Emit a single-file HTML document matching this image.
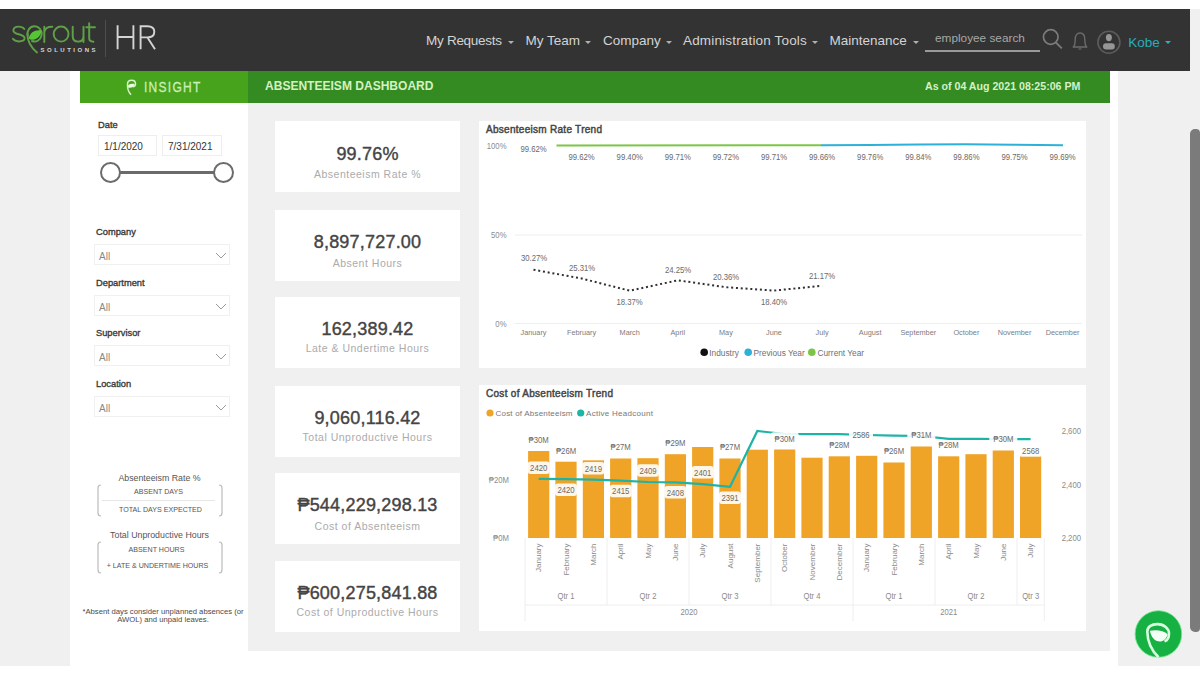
<!DOCTYPE html>
<html><head><meta charset="utf-8">
<style>
*{margin:0;padding:0;box-sizing:border-box}
html,body{width:1200px;height:675px;overflow:hidden;background:#fff;font-family:"Liberation Sans",sans-serif}
.a{position:absolute}
#hdr{left:0;top:9px;width:1190px;height:61.6px;background:#333333}
.nav{top:32.5px;font-size:13.5px;color:#d4d4d4;white-space:nowrap}
.caret{top:41px;width:0;height:0;border-left:3px solid transparent;border-right:3px solid transparent;border-top:3px solid #b0b0b0}
.car{display:inline-block;width:0;height:0;border-left:3px solid transparent;border-right:3px solid transparent;border-top:3px solid #bbb;vertical-align:middle;margin-left:6px}
.side{background:#f0f0f0}
.card{background:#fff;position:absolute}
.kv{position:absolute;left:0;width:185px;text-align:center;color:#444;font-size:18px;font-weight:normal;-webkit-text-stroke:0.4px #444;letter-spacing:0.2px}
.kl{position:absolute;left:0;width:185px;text-align:center;color:#ababab;font-size:10.5px;letter-spacing:0.5px}
.flab{font-size:9.3px;font-weight:normal;color:#3a3a3a;-webkit-text-stroke:0.35px #3a3a3a;left:96px}
.dd{left:94px;width:136px;height:21px;border:1px solid #f0f0f0;background:#fff}
.dd span{position:absolute;left:4px;top:6px;font-size:10px;color:#888}
.fx{font-size:7.1px;color:#555;text-align:center;white-space:nowrap}
</style></head><body>
<!-- side gray areas -->
<div class="a side" style="left:0;top:70px;width:70px;height:596px"></div>
<div class="a side" style="left:1118px;top:9px;width:82px;height:657px"></div>
<!-- center gray -->
<div class="a" style="left:248px;top:102px;width:862px;height:548.5px;background:#f0f0f0"></div>

<!-- header -->
<div id="hdr" class="a"></div>
<!-- logo -->
<svg class="a" style="left:0;top:0" width="110" height="60" viewBox="0 0 110 60">
<g fill="none" stroke="#5fa046" stroke-width="1.95" stroke-linecap="round">
<path d="M24.3 29 C23 27.2 21.2 26.6 18.8 26.6 C15.6 26.6 13.4 28.2 13.4 30.4 C13.4 32.7 15.8 33.5 18.8 34.2 C22 35 24.6 36 24.6 38.3 C24.6 40.5 22.2 41.4 18.8 41.4 C16 41.4 14 40.5 12.9 38.8"/>
<path d="M27.6 35.5 A7.1 7.6 0 1 1 32 41"/>
<path d="M27.4 34 C27.4 42.5 31 47.5 37 52.5"/>
<path d="M44.3 42 L44.3 26.8 M44.3 32 C45.2 28.3 48.2 26.6 52.3 26.8"/>
<ellipse cx="61.1" cy="34.1" rx="7.4" ry="7.5"/>
<path d="M72.7 26.8 L72.7 36 C72.7 40 75 41.6 78.1 41.6 C81.2 41.6 83.5 40 83.5 36 L83.5 26.8 M83.5 36 L83.5 42"/>
<path d="M89.2 23.2 L89.2 38.3 C89.2 40.8 90.6 41.7 93.4 41.7 M86.3 27.3 L95 27.3"/>
</g>
<path d="M28.6 38.6 C30 32 35.5 29.3 41.6 30.5 C40.6 37.2 35.5 40.4 30.8 39.8 Z" fill="#56c535"/>
<text x="40.5" y="51.8" font-family="Liberation Sans, sans-serif" font-size="6" font-weight="bold" fill="#d6d6d6" textLength="55" lengthAdjust="spacing">SOLUTIONS</text>
</svg>
<div class="a" style="left:105px;top:20px;width:1px;height:37px;background:#4e4e4e"></div>
<svg class="a" style="left:100px;top:15px" width="65" height="45" viewBox="100 15 65 45"><g fill="none" stroke="#d4d4d4" stroke-width="1.9"><path d="M117.6 25.3 L117.6 49.3 M133.4 25.3 L133.4 49.3 M117.6 37 L133.4 37"/><path d="M140.6 49.3 L140.6 26.2 L147.5 26.2 C152 26.2 154.3 28.6 154.3 31.8 C154.3 35 152 37.4 147.5 37.4 L140.6 37.4 M147.5 37.4 L155 49.3"/></g></svg>

<div class="a nav" style="left:426.0px;letter-spacing:-0.28px">My Requests</div><div class="a caret" style="left:508px"></div>
<div class="a nav" style="left:525.5px">My Team</div><div class="a caret" style="left:584.8px"></div>
<div class="a nav" style="left:603.0px">Company</div><div class="a caret" style="left:666px"></div>
<div class="a nav" style="left:683px;letter-spacing:0.17px">Administration Tools</div><div class="a caret" style="left:812px"></div>
<div class="a nav" style="left:829.5px">Maintenance</div><div class="a caret" style="left:913px"></div>
<div class="a" style="left:935px;top:31px;font-size:11.8px;color:#a8a8a8">employee search</div>
<div class="a" style="left:925px;top:50px;width:115px;height:2px;background:#9a9a9a"></div>
<svg class="a" style="left:1040px;top:26px" width="30" height="26"><circle cx="10.75" cy="11" r="7.3" fill="none" stroke="#7c7c7c" stroke-width="1.7"/><line x1="16" y1="16.6" x2="21.8" y2="22.4" stroke="#7c7c7c" stroke-width="1.9"/></svg>
<svg class="a" style="left:1070px;top:30px" width="20" height="22"><path d="M3.2 17 C5 15.5 5.2 13 5.2 9.5 C5.2 5.2 7.2 3 10 3 C12.8 3 14.8 5.2 14.8 9.5 C14.8 13 15 15.5 16.8 17 Z" fill="none" stroke="#6c6c6c" stroke-width="1.4" stroke-linejoin="round"/><path d="M8.6 18.6 Q10 19.8 11.4 18.6" stroke="#6c6c6c" stroke-width="1.2" fill="none"/></svg>
<svg class="a" style="left:1096px;top:29px" width="26" height="27"><circle cx="12.9" cy="13.25" r="11" fill="none" stroke="#5c5c5c" stroke-width="1.6"/><ellipse cx="12.9" cy="8.6" rx="3" ry="3.6" fill="#969696"/><rect x="7" y="14.2" width="11.8" height="6.4" rx="3" fill="#969696"/></svg>
<div class="a" style="left:1128.3px;top:35px;font-size:13.5px;color:#28adbd">Kobe</div><div class="a caret" style="left:1165px;border-top-color:#2bb0bf"></div>

<!-- green bar -->
<div class="a" style="left:80px;top:70.6px;width:168px;height:32px;background:#48a31c"></div>
<div class="a" style="left:248px;top:70.6px;width:862px;height:32px;background:#338b22"></div>
<div class="a" style="left:144px;top:77.5px;font-size:15px;color:#c9efb9;letter-spacing:1.6px;transform:scaleX(0.80);transform-origin:0 0;-webkit-text-stroke:0.3px #c9efb9">INSIGHT</div>
<svg class="a" style="left:124px;top:78px" width="14" height="19"><path d="M3.5 6 C3.5 3.5 5.5 2.2 7.6 2.2 C10 2.2 11.5 3.8 11.5 5.8 C11.5 7.6 10.2 8.8 8.6 8.8" fill="none" stroke="#d6f5c8" stroke-width="1.5"/><path d="M3.3 9.2 C4 6.3 6.6 5.3 10.6 6 C10 8.8 7.6 10.2 4.8 9.8 Z" fill="#eaffde"/><path d="M3.5 6 C3.2 10 4.5 14 7 16.8" fill="none" stroke="#d6f5c8" stroke-width="1.4"/></svg>
<div class="a" style="left:265px;top:78px;font-size:13.3px;font-weight:bold;color:#d3f2c3;transform:scaleX(0.905);transform-origin:0 0">ABSENTEEISM DASHBOARD</div>
<div class="a" style="left:924.5px;top:80px;font-size:11px;font-weight:bold;color:#d6f0c9;transform:scaleX(0.965);transform-origin:0 0">As of 04 Aug 2021 08:25:06 PM</div>


<!-- filter panel -->
<div class="a flab" style="left:98px;top:120px">Date</div>
<div class="a" style="left:98px;top:135px;width:59px;height:21px;border:1px solid #eeeeee"><span class="a" style="left:5px;top:5px;font-size:10px;color:#333">1/1/2020</span></div>
<div class="a" style="left:162px;top:135px;width:60px;height:21px;border:1px solid #eeeeee"><span class="a" style="left:5px;top:5px;font-size:10px;color:#333">7/31/2021</span></div>
<div class="a" style="left:120px;top:171px;width:94px;height:3px;background:#6b6b6b"></div>
<div class="a" style="left:100px;top:162px;width:21px;height:21px;border:2px solid #6b6b6b;border-radius:50%;background:#fff"></div>
<div class="a" style="left:213px;top:162px;width:21px;height:21px;border:2px solid #6b6b6b;border-radius:50%;background:#fff"></div>

<div class="a flab" style="top:227px">Company</div>
<div class="a dd" style="top:244px"><span>All</span><svg class="a" style="left:120px;top:7px" width="14" height="9"><path d="M1 1 L6 6 L11 1" fill="none" stroke="#9a9a9a" stroke-width="1"/></svg></div>
<div class="a flab" style="top:278px">Department</div>
<div class="a dd" style="top:295px"><span>All</span><svg class="a" style="left:120px;top:7px" width="14" height="9"><path d="M1 1 L6 6 L11 1" fill="none" stroke="#9a9a9a" stroke-width="1"/></svg></div>
<div class="a flab" style="top:328px">Supervisor</div>
<div class="a dd" style="top:345px"><span>All</span><svg class="a" style="left:120px;top:7px" width="14" height="9"><path d="M1 1 L6 6 L11 1" fill="none" stroke="#9a9a9a" stroke-width="1"/></svg></div>
<div class="a flab" style="top:379px">Location</div>
<div class="a dd" style="top:396px"><span>All</span><svg class="a" style="left:120px;top:7px" width="14" height="9"><path d="M1 1 L6 6 L11 1" fill="none" stroke="#9a9a9a" stroke-width="1"/></svg></div>

<div class="a fx" style="left:98px;top:473px;width:123px;font-size:8.8px;color:#555">Absenteeism Rate %</div>
<div class="a fx" style="left:97px;top:488px;width:123px">ABSENT DAYS</div>
<div class="a" style="left:102px;top:500px;width:113px;height:1px;background:#e6e6e6"></div>
<div class="a fx" style="left:99px;top:506px;width:123px">TOTAL DAYS EXPECTED</div>
<svg class="a" style="left:95px;top:484px" width="8" height="34"><path d="M6 1 Q3 1 3 4 L3 29 Q3 32 6 32" fill="none" stroke="#bbb" stroke-width="1.2"/></svg>
<svg class="a" style="left:217px;top:484px" width="8" height="34"><path d="M2 1 Q5 1 5 4 L5 29 Q5 32 2 32" fill="none" stroke="#bbb" stroke-width="1.2"/></svg>

<div class="a fx" style="left:98px;top:530px;width:123px;font-size:8.8px;color:#555">Total Unproductive Hours</div>
<div class="a fx" style="left:95px;top:545.5px;width:123px">ABSENT HOURS</div>
<div class="a fx" style="left:96px;top:561.5px;width:123px">+ LATE &amp; UNDERTIME HOURS</div>
<svg class="a" style="left:95px;top:541px" width="8" height="34"><path d="M6 1 Q3 1 3 4 L3 29 Q3 32 6 32" fill="none" stroke="#bbb" stroke-width="1.2"/></svg>
<svg class="a" style="left:217px;top:541px" width="8" height="34"><path d="M2 1 Q5 1 5 4 L5 29 Q5 32 2 32" fill="none" stroke="#bbb" stroke-width="1.2"/></svg>

<div class="a fx" style="left:78px;top:606.5px;width:170px;font-size:7.7px;color:#4a4a4a">*Absent days consider unplanned absences (or</div>
<div class="a fx" style="left:78px;top:615px;width:170px;font-size:7.7px;color:#4a4a4a">AWOL) and unpaid leaves.</div>

<!-- KPI cards -->
<div class="card" style="left:275px;top:121px;width:185px;height:71px"><div class="kv" style="top:23px">99.76%</div><div class="kl" style="top:47px">Absenteeism Rate %</div></div>
<div class="card" style="left:275px;top:210px;width:185px;height:71px"><div class="kv" style="top:22px">8,897,727.00</div><div class="kl" style="top:46.5px">Absent Hours</div></div>
<div class="card" style="left:275px;top:297px;width:185px;height:71px"><div class="kv" style="top:22px">162,389.42</div><div class="kl" style="top:45px">Late &amp; Undertime Hours</div></div>
<div class="card" style="left:275px;top:386px;width:185px;height:71px"><div class="kv" style="top:22px">9,060,116.42</div><div class="kl" style="top:45px">Total Unproductive Hours</div></div>
<div class="card" style="left:275px;top:473px;width:185px;height:71px"><div class="kv" style="top:22px">&#8369;544,229,298.13</div><div class="kl" style="top:46.5px">Cost of Absenteeism</div></div>
<div class="card" style="left:275px;top:561px;width:185px;height:71px"><div class="kv" style="top:22px">&#8369;600,275,841.88</div><div class="kl" style="top:45px">Cost of Unproductive Hours</div></div>
<svg class="a" style="left:479px;top:121px" width="607" height="247" viewBox="479 121 607 247" font-family="Liberation Sans, sans-serif">
<rect x="479" y="121" width="607" height="247" fill="#fff"/>
<text x="486" y="132.5" font-size="10" fill="#454545" stroke="#454545" stroke-width="0.45" textLength="116" lengthAdjust="spacing">Absenteeism Rate Trend</text>
<g transform="translate(506.50,148.80) scale(0.86,1)"><text x="0" y="0" font-size="9" fill="#8c8c8c" text-anchor="end" >100%</text></g>
<g transform="translate(506.50,238.40) scale(0.86,1)"><text x="0" y="0" font-size="9" fill="#8c8c8c" text-anchor="end" >50%</text></g>
<g transform="translate(506.50,326.60) scale(0.86,1)"><text x="0" y="0" font-size="9" fill="#8c8c8c" text-anchor="end" >0%</text></g>
<line x1="515" y1="235" x2="1082" y2="235" stroke="#eeeeee" stroke-width="1"/>
<line x1="515" y1="323.5" x2="1082" y2="323.5" stroke="#eeeeee" stroke-width="1"/>
<text x="533.50" y="335.20" font-size="7.3" fill="#7d7d7d" text-anchor="middle" >January</text>
<text x="581.60" y="335.20" font-size="7.3" fill="#7d7d7d" text-anchor="middle" >February</text>
<text x="629.70" y="335.20" font-size="7.3" fill="#7d7d7d" text-anchor="middle" >March</text>
<text x="677.80" y="335.20" font-size="7.3" fill="#7d7d7d" text-anchor="middle" >April</text>
<text x="725.90" y="335.20" font-size="7.3" fill="#7d7d7d" text-anchor="middle" >May</text>
<text x="774.00" y="335.20" font-size="7.3" fill="#7d7d7d" text-anchor="middle" >June</text>
<text x="822.10" y="335.20" font-size="7.3" fill="#7d7d7d" text-anchor="middle" >July</text>
<text x="870.20" y="335.20" font-size="7.3" fill="#7d7d7d" text-anchor="middle" >August</text>
<text x="918.30" y="335.20" font-size="7.3" fill="#7d7d7d" text-anchor="middle" >September</text>
<text x="966.40" y="335.20" font-size="7.3" fill="#7d7d7d" text-anchor="middle" >October</text>
<text x="1014.50" y="335.20" font-size="7.3" fill="#7d7d7d" text-anchor="middle" >November</text>
<text x="1062.60" y="335.20" font-size="7.3" fill="#7d7d7d" text-anchor="middle" >December</text>
<polyline points="821,145.3 870,145 918,144.6 966,144.3 1014,144.8 1063,145.3" fill="none" stroke="#2db1d8" stroke-width="2"/>
<line x1="556.5" y1="145.5" x2="821" y2="145.3" stroke="#7cc646" stroke-width="2"/>
<g transform="translate(533.50,152.00) scale(0.86,1)"><text x="0" y="0" font-size="9" fill="#6a6a6a" text-anchor="middle" >99.62%</text></g>
<g transform="translate(581.60,160.20) scale(0.86,1)"><text x="0" y="0" font-size="9" fill="#6a6a6a" text-anchor="middle" >99.62%</text></g>
<g transform="translate(629.70,160.20) scale(0.86,1)"><text x="0" y="0" font-size="9" fill="#6a6a6a" text-anchor="middle" >99.40%</text></g>
<g transform="translate(677.80,160.20) scale(0.86,1)"><text x="0" y="0" font-size="9" fill="#6a6a6a" text-anchor="middle" >99.71%</text></g>
<g transform="translate(725.90,160.20) scale(0.86,1)"><text x="0" y="0" font-size="9" fill="#6a6a6a" text-anchor="middle" >99.72%</text></g>
<g transform="translate(774.00,160.20) scale(0.86,1)"><text x="0" y="0" font-size="9" fill="#6a6a6a" text-anchor="middle" >99.71%</text></g>
<g transform="translate(822.10,160.20) scale(0.86,1)"><text x="0" y="0" font-size="9" fill="#6a6a6a" text-anchor="middle" >99.66%</text></g>
<g transform="translate(870.20,160.20) scale(0.86,1)"><text x="0" y="0" font-size="9" fill="#6a6a6a" text-anchor="middle" >99.76%</text></g>
<g transform="translate(918.30,160.20) scale(0.86,1)"><text x="0" y="0" font-size="9" fill="#6a6a6a" text-anchor="middle" >99.84%</text></g>
<g transform="translate(966.40,160.20) scale(0.86,1)"><text x="0" y="0" font-size="9" fill="#6a6a6a" text-anchor="middle" >99.86%</text></g>
<g transform="translate(1014.50,160.20) scale(0.86,1)"><text x="0" y="0" font-size="9" fill="#6a6a6a" text-anchor="middle" >99.75%</text></g>
<g transform="translate(1062.60,160.20) scale(0.86,1)"><text x="0" y="0" font-size="9" fill="#6a6a6a" text-anchor="middle" >99.69%</text></g>
<polyline points="533.5,269.7 581.6,278.5 629.7,290.7 677.8,280.3 725.9,287.2 774.0,290.6 822.1,285.7" fill="none" stroke="#303030" stroke-width="2" stroke-dasharray="2 2.8"/>
<g transform="translate(534.00,261.30) scale(0.86,1)"><text x="0" y="0" font-size="9" fill="#6a6a6a" text-anchor="middle" >30.27%</text></g>
<g transform="translate(582.00,270.80) scale(0.86,1)"><text x="0" y="0" font-size="9" fill="#6a6a6a" text-anchor="middle" >25.31%</text></g>
<g transform="translate(629.50,305.40) scale(0.86,1)"><text x="0" y="0" font-size="9" fill="#6a6a6a" text-anchor="middle" >18.37%</text></g>
<g transform="translate(678.00,272.80) scale(0.86,1)"><text x="0" y="0" font-size="9" fill="#6a6a6a" text-anchor="middle" >24.25%</text></g>
<g transform="translate(726.00,279.50) scale(0.86,1)"><text x="0" y="0" font-size="9" fill="#6a6a6a" text-anchor="middle" >20.36%</text></g>
<g transform="translate(774.00,305.40) scale(0.86,1)"><text x="0" y="0" font-size="9" fill="#6a6a6a" text-anchor="middle" >18.40%</text></g>
<g transform="translate(822.00,278.50) scale(0.86,1)"><text x="0" y="0" font-size="9" fill="#6a6a6a" text-anchor="middle" >21.17%</text></g>
<circle cx="704.2" cy="352.3" r="3.8" fill="#111"/><text x="709.30" y="355.50" font-size="8.3" fill="#707070" text-anchor="start" >Industry</text>
<circle cx="748.2" cy="352.3" r="3.8" fill="#2db1d8"/><text x="753.50" y="355.50" font-size="8.3" fill="#707070" text-anchor="start" >Previous Year</text>
<circle cx="811.8" cy="352.3" r="3.8" fill="#7cc646"/><text x="817.50" y="355.50" font-size="8.3" fill="#707070" text-anchor="start" >Current Year</text>
</svg>
<svg class="a" style="left:479px;top:385px" width="607" height="246" viewBox="479 385 607 246" font-family="Liberation Sans, sans-serif">
<rect x="479" y="385" width="607" height="246" fill="#fff"/>
<text x="486" y="396.5" font-size="10" fill="#454545" stroke="#454545" stroke-width="0.45" textLength="127" lengthAdjust="spacing">Cost of Absenteeism Trend</text>
<circle cx="490" cy="413" r="3.6" fill="#f0a427"/><text x="495.5" y="415.9" font-size="8" fill="#777" textLength="77" lengthAdjust="spacing">Cost of Absenteeism</text>
<circle cx="580.7" cy="413" r="3.6" fill="#1ab7a6"/><text x="586" y="415.9" font-size="8" fill="#777" textLength="67" lengthAdjust="spacing">Active Headcount</text>
<g transform="translate(509.00,483.30) scale(0.86,1)"><text x="0" y="0" font-size="9" fill="#8c8c8c" text-anchor="end" >&#8369;20M</text></g>
<g transform="translate(509.00,541.30) scale(0.86,1)"><text x="0" y="0" font-size="9" fill="#8c8c8c" text-anchor="end" >&#8369;0M</text></g>
<g transform="translate(1081.00,434.30) scale(0.86,1)"><text x="0" y="0" font-size="9" fill="#8c8c8c" text-anchor="end" >2,600</text></g>
<g transform="translate(1081.00,487.60) scale(0.86,1)"><text x="0" y="0" font-size="9" fill="#8c8c8c" text-anchor="end" >2,400</text></g>
<g transform="translate(1081.00,541.30) scale(0.86,1)"><text x="0" y="0" font-size="9" fill="#8c8c8c" text-anchor="end" >2,200</text></g>
<rect x="528.1" y="451" width="21.2" height="87.0" fill="#f0a427"/>
<rect x="555.4" y="461.7" width="21.2" height="76.3" fill="#f0a427"/>
<rect x="582.8" y="460.3" width="21.2" height="77.7" fill="#f0a427"/>
<rect x="610.1" y="458.5" width="21.2" height="79.5" fill="#f0a427"/>
<rect x="637.4" y="458.2" width="21.2" height="79.8" fill="#f0a427"/>
<rect x="664.8" y="454.2" width="21.2" height="83.8" fill="#f0a427"/>
<rect x="692.1" y="447" width="21.2" height="91.0" fill="#f0a427"/>
<rect x="719.4" y="458.5" width="21.2" height="79.5" fill="#f0a427"/>
<rect x="746.7" y="449.7" width="21.2" height="88.3" fill="#f0a427"/>
<rect x="774.1" y="449.5" width="21.2" height="88.5" fill="#f0a427"/>
<rect x="801.4" y="457.7" width="21.2" height="80.3" fill="#f0a427"/>
<rect x="828.7" y="456.3" width="21.2" height="81.7" fill="#f0a427"/>
<rect x="856.1" y="455.8" width="21.2" height="82.2" fill="#f0a427"/>
<rect x="883.4" y="462.5" width="21.2" height="75.5" fill="#f0a427"/>
<rect x="910.7" y="446.5" width="21.2" height="91.5" fill="#f0a427"/>
<rect x="938.1" y="456.3" width="21.2" height="81.7" fill="#f0a427"/>
<rect x="965.4" y="454.2" width="21.2" height="83.8" fill="#f0a427"/>
<rect x="992.7" y="450.5" width="21.2" height="87.5" fill="#f0a427"/>
<rect x="1020.0" y="455.8" width="21.2" height="82.2" fill="#f0a427"/>
<polyline points="538.7,478.9 566.0,479.2 593.4,479.6 620.7,480.6 648.0,482.0 675.4,482.4 702.7,484.2 730.0,486.8 757.3,431 784.7,434 812.0,434.2 839.3,434.2 866.7,435 894.0,435.6 921.3,436 948.7,438.8 976.0,438.8 1003.3,439 1030.6,439.2" fill="none" stroke="#1db3a6" stroke-width="2.2"/>
<rect x="527.7" y="461.6" width="22.0" height="12.5" rx="3" fill="#fff" fill-opacity="0.9"/><g transform="translate(538.70,471.00) scale(0.86,1)"><text x="0" y="0" font-size="9" fill="#6a6a6a" text-anchor="middle" >2420</text></g>
<rect x="555.0" y="483.4" width="22.0" height="12.5" rx="3" fill="#fff" fill-opacity="0.9"/><g transform="translate(566.03,492.90) scale(0.86,1)"><text x="0" y="0" font-size="9" fill="#6a6a6a" text-anchor="middle" >2420</text></g>
<rect x="582.4" y="462.1" width="22.0" height="12.5" rx="3" fill="#fff" fill-opacity="0.9"/><g transform="translate(593.36,471.50) scale(0.86,1)"><text x="0" y="0" font-size="9" fill="#6a6a6a" text-anchor="middle" >2419</text></g>
<rect x="609.7" y="484.8" width="22.0" height="12.5" rx="3" fill="#fff" fill-opacity="0.9"/><g transform="translate(620.69,494.20) scale(0.86,1)"><text x="0" y="0" font-size="9" fill="#6a6a6a" text-anchor="middle" >2415</text></g>
<rect x="637.0" y="464.2" width="22.0" height="12.5" rx="3" fill="#fff" fill-opacity="0.9"/><g transform="translate(648.02,473.70) scale(0.86,1)"><text x="0" y="0" font-size="9" fill="#6a6a6a" text-anchor="middle" >2409</text></g>
<rect x="664.4" y="486.1" width="22.0" height="12.5" rx="3" fill="#fff" fill-opacity="0.9"/><g transform="translate(675.35,495.50) scale(0.86,1)"><text x="0" y="0" font-size="9" fill="#6a6a6a" text-anchor="middle" >2408</text></g>
<rect x="691.7" y="466.1" width="22.0" height="12.5" rx="3" fill="#fff" fill-opacity="0.9"/><g transform="translate(702.68,475.50) scale(0.86,1)"><text x="0" y="0" font-size="9" fill="#6a6a6a" text-anchor="middle" >2401</text></g>
<rect x="719.0" y="491.4" width="22.0" height="12.5" rx="3" fill="#fff" fill-opacity="0.9"/><g transform="translate(730.01,500.90) scale(0.86,1)"><text x="0" y="0" font-size="9" fill="#6a6a6a" text-anchor="middle" >2391</text></g>
<g transform="translate(538.70,443.00) scale(0.86,1)"><text x="0" y="0" font-size="9" fill="#6a6a6a" text-anchor="middle" >&#8369;30M</text></g>
<g transform="translate(566.03,454.20) scale(0.86,1)"><text x="0" y="0" font-size="9" fill="#6a6a6a" text-anchor="middle" >&#8369;26M</text></g>
<g transform="translate(620.69,450.20) scale(0.86,1)"><text x="0" y="0" font-size="9" fill="#6a6a6a" text-anchor="middle" >&#8369;27M</text></g>
<g transform="translate(675.35,446.20) scale(0.86,1)"><text x="0" y="0" font-size="9" fill="#6a6a6a" text-anchor="middle" >&#8369;29M</text></g>
<g transform="translate(730.01,450.20) scale(0.86,1)"><text x="0" y="0" font-size="9" fill="#6a6a6a" text-anchor="middle" >&#8369;27M</text></g>
<rect x="770.7" y="432.2" width="28.0" height="12.5" rx="3" fill="#fff" fill-opacity="0.9"/>
<g transform="translate(784.67,441.70) scale(0.86,1)"><text x="0" y="0" font-size="9" fill="#6a6a6a" text-anchor="middle" >&#8369;30M</text></g>
<g transform="translate(839.33,448.10) scale(0.86,1)"><text x="0" y="0" font-size="9" fill="#6a6a6a" text-anchor="middle" >&#8369;28M</text></g>
<g transform="translate(893.99,454.20) scale(0.86,1)"><text x="0" y="0" font-size="9" fill="#6a6a6a" text-anchor="middle" >&#8369;26M</text></g>
<rect x="907.3" y="428.8" width="28.0" height="12.5" rx="3" fill="#fff" fill-opacity="0.9"/>
<g transform="translate(921.32,438.20) scale(0.86,1)"><text x="0" y="0" font-size="9" fill="#6a6a6a" text-anchor="middle" >&#8369;31M</text></g>
<g transform="translate(948.65,448.10) scale(0.86,1)"><text x="0" y="0" font-size="9" fill="#6a6a6a" text-anchor="middle" >&#8369;28M</text></g>
<rect x="989.3" y="432.8" width="28.0" height="12.5" rx="3" fill="#fff" fill-opacity="0.9"/>
<g transform="translate(1003.31,442.20) scale(0.86,1)"><text x="0" y="0" font-size="9" fill="#6a6a6a" text-anchor="middle" >&#8369;30M</text></g>
<rect x="849.0" y="428.2" width="24.0" height="12.5" rx="3" fill="#fff" fill-opacity="0.9"/><g transform="translate(861.00,437.70) scale(0.86,1)"><text x="0" y="0" font-size="9" fill="#6a6a6a" text-anchor="middle" >2586</text></g>
<rect x="1018.7" y="444.2" width="24.0" height="12.5" rx="3" fill="#fff" fill-opacity="0.9"/><g transform="translate(1030.70,453.70) scale(0.86,1)"><text x="0" y="0" font-size="9" fill="#6a6a6a" text-anchor="middle" >2568</text></g>
<text transform="translate(541.3,543.5) rotate(-90)" font-size="8" fill="#8a8a8a" text-anchor="end">January</text>
<text transform="translate(568.6,543.5) rotate(-90)" font-size="8" fill="#8a8a8a" text-anchor="end">February</text>
<text transform="translate(596.0,543.5) rotate(-90)" font-size="8" fill="#8a8a8a" text-anchor="end">March</text>
<text transform="translate(623.3,543.5) rotate(-90)" font-size="8" fill="#8a8a8a" text-anchor="end">April</text>
<text transform="translate(650.6,543.5) rotate(-90)" font-size="8" fill="#8a8a8a" text-anchor="end">May</text>
<text transform="translate(678.0,543.5) rotate(-90)" font-size="8" fill="#8a8a8a" text-anchor="end">June</text>
<text transform="translate(705.3,543.5) rotate(-90)" font-size="8" fill="#8a8a8a" text-anchor="end">July</text>
<text transform="translate(732.6,543.5) rotate(-90)" font-size="8" fill="#8a8a8a" text-anchor="end">August</text>
<text transform="translate(759.9,543.5) rotate(-90)" font-size="8" fill="#8a8a8a" text-anchor="end">September</text>
<text transform="translate(787.3,543.5) rotate(-90)" font-size="8" fill="#8a8a8a" text-anchor="end">October</text>
<text transform="translate(814.6,543.5) rotate(-90)" font-size="8" fill="#8a8a8a" text-anchor="end">November</text>
<text transform="translate(841.9,543.5) rotate(-90)" font-size="8" fill="#8a8a8a" text-anchor="end">December</text>
<text transform="translate(869.3,543.5) rotate(-90)" font-size="8" fill="#8a8a8a" text-anchor="end">January</text>
<text transform="translate(896.6,543.5) rotate(-90)" font-size="8" fill="#8a8a8a" text-anchor="end">February</text>
<text transform="translate(923.9,543.5) rotate(-90)" font-size="8" fill="#8a8a8a" text-anchor="end">March</text>
<text transform="translate(951.3,543.5) rotate(-90)" font-size="8" fill="#8a8a8a" text-anchor="end">April</text>
<text transform="translate(978.6,543.5) rotate(-90)" font-size="8" fill="#8a8a8a" text-anchor="end">May</text>
<text transform="translate(1005.9,543.5) rotate(-90)" font-size="8" fill="#8a8a8a" text-anchor="end">June</text>
<text transform="translate(1033.2,543.5) rotate(-90)" font-size="8" fill="#8a8a8a" text-anchor="end">July</text>
<line x1="525.0" y1="538" x2="525.0" y2="621" stroke="#eeeeee" stroke-width="1"/>
<line x1="607.0" y1="538" x2="607.0" y2="605" stroke="#eeeeee" stroke-width="1"/>
<line x1="689.0" y1="538" x2="689.0" y2="605" stroke="#eeeeee" stroke-width="1"/>
<line x1="771.0" y1="538" x2="771.0" y2="605" stroke="#eeeeee" stroke-width="1"/>
<line x1="853.0" y1="538" x2="853.0" y2="621" stroke="#eeeeee" stroke-width="1"/>
<line x1="935.0" y1="538" x2="935.0" y2="605" stroke="#eeeeee" stroke-width="1"/>
<line x1="1017.0" y1="538" x2="1017.0" y2="605" stroke="#eeeeee" stroke-width="1"/>
<line x1="1044.3" y1="538" x2="1044.3" y2="621" stroke="#eeeeee" stroke-width="1"/>
<line x1="525.0" y1="605" x2="1044.3" y2="605" stroke="#eeeeee" stroke-width="1"/>
<g transform="translate(566.03,599.30) scale(0.9,1)"><text x="0" y="0" font-size="8.5" fill="#8a8a8a" text-anchor="middle" >Qtr 1</text></g>
<g transform="translate(648.02,599.30) scale(0.9,1)"><text x="0" y="0" font-size="8.5" fill="#8a8a8a" text-anchor="middle" >Qtr 2</text></g>
<g transform="translate(730.01,599.30) scale(0.9,1)"><text x="0" y="0" font-size="8.5" fill="#8a8a8a" text-anchor="middle" >Qtr 3</text></g>
<g transform="translate(812.00,599.30) scale(0.9,1)"><text x="0" y="0" font-size="8.5" fill="#8a8a8a" text-anchor="middle" >Qtr 4</text></g>
<g transform="translate(893.99,599.30) scale(0.9,1)"><text x="0" y="0" font-size="8.5" fill="#8a8a8a" text-anchor="middle" >Qtr 1</text></g>
<g transform="translate(975.98,599.30) scale(0.9,1)"><text x="0" y="0" font-size="8.5" fill="#8a8a8a" text-anchor="middle" >Qtr 2</text></g>
<g transform="translate(1030.64,599.30) scale(0.9,1)"><text x="0" y="0" font-size="8.5" fill="#8a8a8a" text-anchor="middle" >Qtr 3</text></g>
<g transform="translate(689.01,615.30) scale(0.9,1)"><text x="0" y="0" font-size="8.5" fill="#8a8a8a" text-anchor="middle" >2020</text></g>
<g transform="translate(948.65,615.30) scale(0.9,1)"><text x="0" y="0" font-size="8.5" fill="#8a8a8a" text-anchor="middle" >2021</text></g>
</svg>
<!-- scrollbar -->
<div class="a" style="left:1190px;top:129px;width:10px;height:503px;background:#7b7b7b;border-radius:5px 4px 4px 5px"></div>
<!-- floating logo -->
<svg class="a" style="left:1133px;top:609px" width="50" height="50"><circle cx="25.4" cy="25" r="23.3" fill="#17b043" stroke="#6fe88a" stroke-width="0.8"/><path d="M17 21.8 C23 20.3 31 21.5 34.6 25.3 C33.6 30 29.8 32.6 27 32.6 C21.5 32.6 17.8 27.5 17 21.8 Z" fill="#f4fff6"/><path d="M31.5 32.4 C34 31.5 36 28.5 36 24.4 C36 19.5 31 15.2 24.6 15.1 C19 15 14.3 17.5 14.3 22.7 C14.5 33 19 42 25.6 48.2" fill="none" stroke="#d8ffe0" stroke-width="2.6"/></svg>
</body></html>
